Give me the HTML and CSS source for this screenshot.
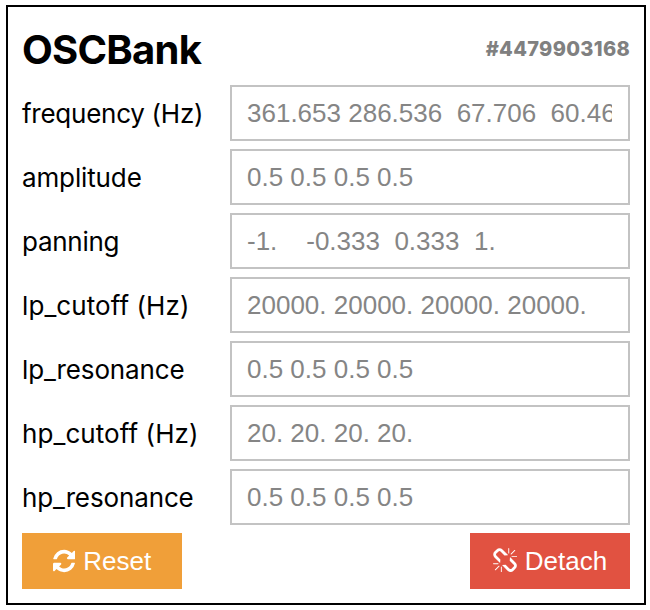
FILE: index.html
```html
<!DOCTYPE html>
<html lang="en">
<head>
<meta charset="utf-8">
<title>OSCBank</title>
<link rel="stylesheet" href="styles.css">
</head>
<body>
<form class="panel">
  <header class="header">
    <h1 class="title">OSCBank</h1>
    <span class="node-id">#4479903168</span>
  </header>
  <div class="row"><span class="label tight">frequency (Hz)</span><div class="field"><span class="value">361.653 286.536  67.706  60.466</span></div></div>
  <div class="row"><span class="label snug">amplitude</span><div class="field"><span class="value">0.5 0.5 0.5 0.5</span></div></div>
  <div class="row"><span class="label tight">panning</span><div class="field"><span class="value">-1.    -0.333  0.333  1.</span></div></div>
  <div class="row"><span class="label loose">lp_cutoff (Hz)</span><div class="field"><span class="value">20000. 20000. 20000. 20000.</span></div></div>
  <div class="row"><span class="label snug">lp_resonance</span><div class="field"><span class="value">0.5 0.5 0.5 0.5</span></div></div>
  <div class="row"><span class="label loose">hp_cutoff (Hz)</span><div class="field"><span class="value">20. 20. 20. 20.</span></div></div>
  <div class="row"><span class="label snug">hp_resonance</span><div class="field"><span class="value">0.5 0.5 0.5 0.5</span></div></div>
  <footer class="actions">
    <button type="button" class="button reset">
      <svg class="icon-refresh" viewBox="128 0 1536 1792" aria-hidden="true"><path d="M1639 1056q0 5-1 7-64 268-268 434.5t-478 166.500q-146 0-282.500-55t-243.500-157l-129 129q-19 19-45 19t-45-19-19-45v-448q0-26 19-45t45-19h448q26 0 45 19t19 45-19 45l-137 137q71 66 161 102t187 36q134 0 250-65t186-179q11-17 53-117 8-23 30-23h192q13 0 22.500 9.500t9.500 22.500zm25-800v448q0 26-19 45t-45 19h-448q-26 0-45-19t-19-45 19-45l138-138q-148-137-349-137-134 0-250 65t-186 179q-11 17-53 117-8 23-30 23h-199q-13 0-22.500-9.500t-9.500-22.500v-7q65-268 270-434.500t480-166.500q146 0 284 55.500t245 156.500l130-129q19-19 45-19t45 19 19 45z"/></svg>
      <span>Reset</span>
    </button>
    <button type="button" class="button detach">
      <svg class="icon-unlink" viewBox="64 0 1664 1792" aria-hidden="true"><path d="M503 1271l-256 256q-10 9-23 9-12 0-23-9-9-10-9-23t9-23l256-256q10-9 23-9t23 9q9 10 9 23t-9 23zm169 41v320q0 14-9 23t-23 9-23-9-9-23v-320q0-14 9-23t23-9 23 9 9 23zm-224-224q0 14-9 23t-23 9h-320q-14 0-23-9t-9-23 9-23 23-9h320q14 0 23 9t9 23zm1264 128q0 120-85 203l-147 146q-83 83-203 83-121 0-204-85l-334-335q-21-21-42-56l239-18 273 274q27 27 68 27.500t68-26.500l147-146q28-28 28-67 0-40-28-68l-274-275 18-239q35 21 56 42l336 336q84 86 84 204zm-617-724l-239 18-273-274q-28-28-68-28-39 0-68 27l-147 146q-28 28-28 67 0 40 28 68l274 274-18 240q-35-21-56-42l-336-336q-84-86-84-204 0-120 85-203l147-146q83-83 203-83 121 0 204 85l334 335q21 21 42 56zm633 84q0 14-9 23t-23 9h-320q-14 0-23-9t-9-23 9-23 23-9h320q14 0 23 9t9 23zm-544-544v320q0 14-9 23t-23 9-23-9-9-23v-320q0-14 9-23t23-9 23 9 9 23zm407 151l-256 256q-11 9-23 9t-23-9q-9-10-9-23t9-23l256-256q10-9 23-9t23 9q9 10 9 23t-9 23z"/></svg>
      <span>Detach</span>
    </button>
  </footer>
</form>
</body>
</html>
```
FILE: styles.css
```css
* { box-sizing: border-box; }

body {
  margin: 0;
  padding: 5px 4px 5px 6px;
  background: #fff;
  color: #000;
  font-family: Inter, sans-serif;
}

.panel {
  display: flex;
  flex-direction: column;
  gap: 8px;
  width: 640px;
  height: 600px;
  padding: 14px;
  border: 2px solid #000;
}

.header,
.row,
.actions {
  display: flex;
  align-items: center;
  justify-content: space-between;
  height: 56px;
}

.title {
  margin: 0;
  padding-top: 2px;
  font-size: 40px;
  line-height: 56px;
  font-weight: 700;
  letter-spacing: -0.75px;
}

.node-id {
  color: #808080;
  font-size: 20px;
  font-weight: 800;
  letter-spacing: 0.3px;
}

.label {
  padding-top: 2px;
  font-size: 26px;
  line-height: 32px;
}

.tight { letter-spacing: -0.26px; }
.snug { letter-spacing: -0.13px; }
.loose { letter-spacing: 0.08px; }

.field {
  width: 400px;
  height: 56px;
  padding: 0 16px 0 15px;
  border: 2px solid #c3c3c3;
  font: 26px/52px "Liberation Sans", sans-serif;
  color: #858585;
}

.value {
  display: block;
  overflow: hidden;
  white-space: pre;
}

.button {
  display: flex;
  align-items: center;
  justify-content: center;
  gap: 8px;
  width: 160px;
  height: 56px;
  padding: 0;
  border: 0;
  color: #fff;
  font: 26px/56px "Liberation Sans", sans-serif;
}

.reset { background: #f09f39; }
.detach { background: #e15241; }

.button svg {
  height: 26px;
  fill: currentColor;
}

.icon-refresh { width: 22.3px; }
.icon-unlink { width: 24.1px; }
```
